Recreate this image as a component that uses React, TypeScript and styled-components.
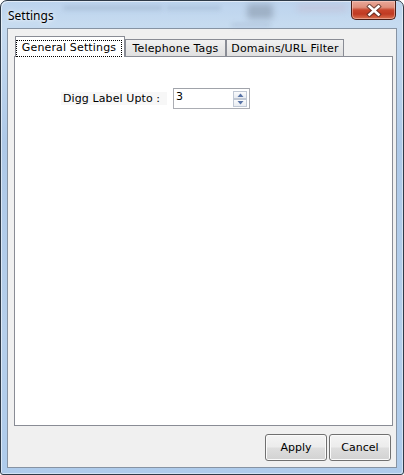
import React from 'react';
import styled, { createGlobalStyle } from 'styled-components';

const Global = createGlobalStyle`
  html, body { margin: 0; padding: 0; background: #ffffff; }
  #root { width: 404px; height: 475px; }
  * { box-sizing: border-box; }
`;

const Window = styled.div`
  position: relative;
  width: 404px;
  height: 475px;
  border: 1px solid #2e3a48;
  border-radius: 7px 7px 3px 3px;
  background: linear-gradient(180deg, #bcd3ed 0%, #c6dbf0 5%, #aec9e8 30%, #b5cfeb 70%, #aecbeb 100%);
  box-shadow: inset 1px 1px 0 rgba(255, 255, 255, 0.55), inset -1px -1px 0 rgba(255, 255, 255, 0.45);
  display: flex;
  flex-direction: column;
  padding: 0 6px 6px 6px;
  overflow: hidden;
`;

const TitleBar = styled.div`
  position: relative;
  height: 27px;
  margin: 0 -6px;
  padding: 0 7px;
  display: flex;
  align-items: center;
  justify-content: space-between;
  flex-shrink: 0;
`;

const Blur = styled.span<{ $l: number; $t: number; $w: number; $h: number; $c: string; $b: number }>`
  position: absolute;
  left: ${(p) => p.$l}px;
  top: ${(p) => p.$t}px;
  width: ${(p) => p.$w}px;
  height: ${(p) => p.$h}px;
  background: ${(p) => p.$c};
  filter: blur(${(p) => p.$b}px);
  border-radius: 3px;
  pointer-events: none;
`;

const Title = styled.span`
  position: relative;
  font-family: 'Noto Sans', 'Open Sans', sans-serif;
  font-size: 12px;
  color: #000;
  margin-top: 1px;
  text-shadow: 0 0 6px rgba(255, 255, 255, 0.9), 0 0 3px rgba(255, 255, 255, 0.8);
`;

const CloseButton = styled.div`
  position: relative;
  align-self: flex-start;
  width: 45px;
  height: 19px;
  border: 1px solid #4a1e16;
  border-top: none;
  border-radius: 0 0 5px 5px;
  background: linear-gradient(180deg, #e9a899 0%, #df8f7c 35%, #c8452c 50%, #c03a22 72%, #d9704f 100%);
  box-shadow: inset 0 0 0 1px rgba(255, 220, 210, 0.45);
  display: flex;
  align-items: center;
  justify-content: center;
`;

const Client = styled.div`
  flex: 1;
  display: flex;
  flex-direction: column;
  border: 1px solid #8693a3;
  background: #f0f0f0;
  padding: 7px 3px 6px 6px;
`;

const TabStrip = styled.div`
  height: 20px;
  display: flex;
  align-items: flex-end;
  padding-left: 1px;
  flex-shrink: 0;
`;

const Tab = styled.div<{ $active?: boolean; $w: number }>`
  position: relative;
  z-index: ${(p) => (p.$active ? 2 : 0)};
  width: ${(p) => p.$w}px;
  height: ${(p) => (p.$active ? 21 : 17)}px;
  margin-bottom: ${(p) => (p.$active ? -1 : 0)}px;
  border: 1px solid #898c95;
  border-bottom: none;
  background: ${(p) => (p.$active ? '#ffffff' : 'linear-gradient(180deg, #f1f1f1 0%, #e8e8e8 50%, #e0e0e0 100%)')};
  font-family: 'DejaVu Sans', Verdana, sans-serif;
  font-size: 11px;
  letter-spacing: 0.15px;
  color: #000;
  display: flex;
  align-items: ${(p) => (p.$active ? 'flex-start' : 'center')};
  justify-content: center;
  padding-top: ${(p) => (p.$active ? 3 : 0)}px;
`;

const Focus = styled.span`
  display: block;
  width: 106px;
  height: 17px;
  margin-left: -2px;
  border: 1px dotted #000;
  line-height: 14px;
  text-align: center;
`;

const Panel = styled.div`
  position: relative;
  z-index: 1;
  flex: 1;
  background: #ffffff;
  border: 1px solid #898c95;
  padding: 31px 0 0 46px;
`;

const FieldRow = styled.div`
  display: flex;
  align-items: center;
  gap: 6px;
`;

const Label = styled.span`
  flex: 0 0 106px;
  height: 13px;
  padding-left: 2px;
  background: #f7f7f7;
  font-family: 'DejaVu Sans', Verdana, sans-serif;
  font-size: 11px;
  letter-spacing: 0.1px;
  line-height: 13px;
  color: #000;
  white-space: nowrap;
  text-align: left;
`;

const SpinBox = styled.div`
  position: relative;
  width: 77px;
  height: 21px;
  border: 1px solid #abadb3;
  border-top-color: #a0a3aa;
  background: #fff;
  display: flex;
  align-items: flex-start;
  padding: 1px 2px 0 2px;
`;

const SpinValue = styled.span`
  flex: 1;
  font-family: 'DejaVu Sans', Verdana, sans-serif;
  font-size: 11px;
  line-height: 14px;
  color: #000;
`;

const SpinButtons = styled.div`
  display: flex;
  flex-direction: column;
  margin-top: 1px;
`;

const SpinButton = styled.div`
  width: 14px;
  height: 8px;
  border: 1px solid #c0c8d4;
  background: linear-gradient(180deg, #fafbfc 0%, #e8ecf1 100%);
  display: flex;
  align-items: center;
  justify-content: center;
`;

const ButtonRow = styled.div`
  display: flex;
  justify-content: flex-end;
  gap: 2px;
  margin-top: 8px;
  padding-right: 2px;
  flex-shrink: 0;
`;

const Button = styled.button`
  width: 62px;
  height: 27px;
  border: 1px solid #707070;
  border-radius: 3px;
  background: linear-gradient(180deg, #f4f4f4 0%, #ececec 48%, #dedede 52%, #d2d2d2 100%);
  box-shadow: inset 0 0 0 1px #fbfbfb;
  font-family: 'DejaVu Sans', Verdana, sans-serif;
  font-size: 11px;
  color: #000;
  padding: 0;
  display: flex;
  align-items: center;
  justify-content: center;
`;

const Arrow = ({ up }: { up?: boolean }) => (
  <svg width="7" height="4" viewBox="0 0 7 4">
    <path d={up ? 'M0.5 4 L3.5 0.5 L6.5 4 Z' : 'M0.5 0 L3.5 3.5 L6.5 0 Z'} fill="#5873a6" />
  </svg>
);

const CloseGlyph = () => (
  <svg width="16" height="13" viewBox="0 0 16 13">
    <path d="M3.5 2.5 L12.5 10.5 M12.5 2.5 L3.5 10.5" stroke="#4a2a24" strokeWidth="4.6" strokeLinecap="square" opacity="0.7" />
    <path d="M3.5 2.5 L12.5 10.5 M12.5 2.5 L3.5 10.5" stroke="#ffffff" strokeWidth="2.6" strokeLinecap="square" />
  </svg>
);

export default function App() {
  return (
    <>
      <Global />
      <Window>
        <TitleBar>
          <Blur $l={62} $t={5} $w={100} $h={4} $c="rgba(110,130,160,0.25)" $b={2} />
          <Blur $l={165} $t={5} $w={55} $h={4} $c="rgba(110,130,160,0.22)" $b={2} />
          <Blur $l={246} $t={3} $w={26} $h={15} $c="rgba(80,90,105,0.3)" $b={3} />
          <Blur $l={230} $t={22} $w={40} $h={4} $c="rgba(130,150,180,0.25)" $b={2} />
          <Blur $l={296} $t={4} $w={50} $h={6} $c="rgba(200,150,170,0.25)" $b={3} />
          <Title>Settings</Title>
          <CloseButton>
            <CloseGlyph />
          </CloseButton>
        </TitleBar>
        <Client>
          <TabStrip>
            <Tab $active $w={110}>
              <Focus>General Settings</Focus>
            </Tab>
            <Tab $w={101}>Telephone Tags</Tab>
            <Tab $w={118}>Domains/URL Filter</Tab>
          </TabStrip>
          <Panel>
            <FieldRow>
              <Label>Digg Label Upto :</Label>
              <SpinBox>
                <SpinValue>3</SpinValue>
                <SpinButtons>
                  <SpinButton>
                    <Arrow up />
                  </SpinButton>
                  <SpinButton>
                    <Arrow />
                  </SpinButton>
                </SpinButtons>
              </SpinBox>
            </FieldRow>
          </Panel>
          <ButtonRow>
            <Button>Apply</Button>
            <Button>Cancel</Button>
          </ButtonRow>
        </Client>
      </Window>
    </>
  );
}
